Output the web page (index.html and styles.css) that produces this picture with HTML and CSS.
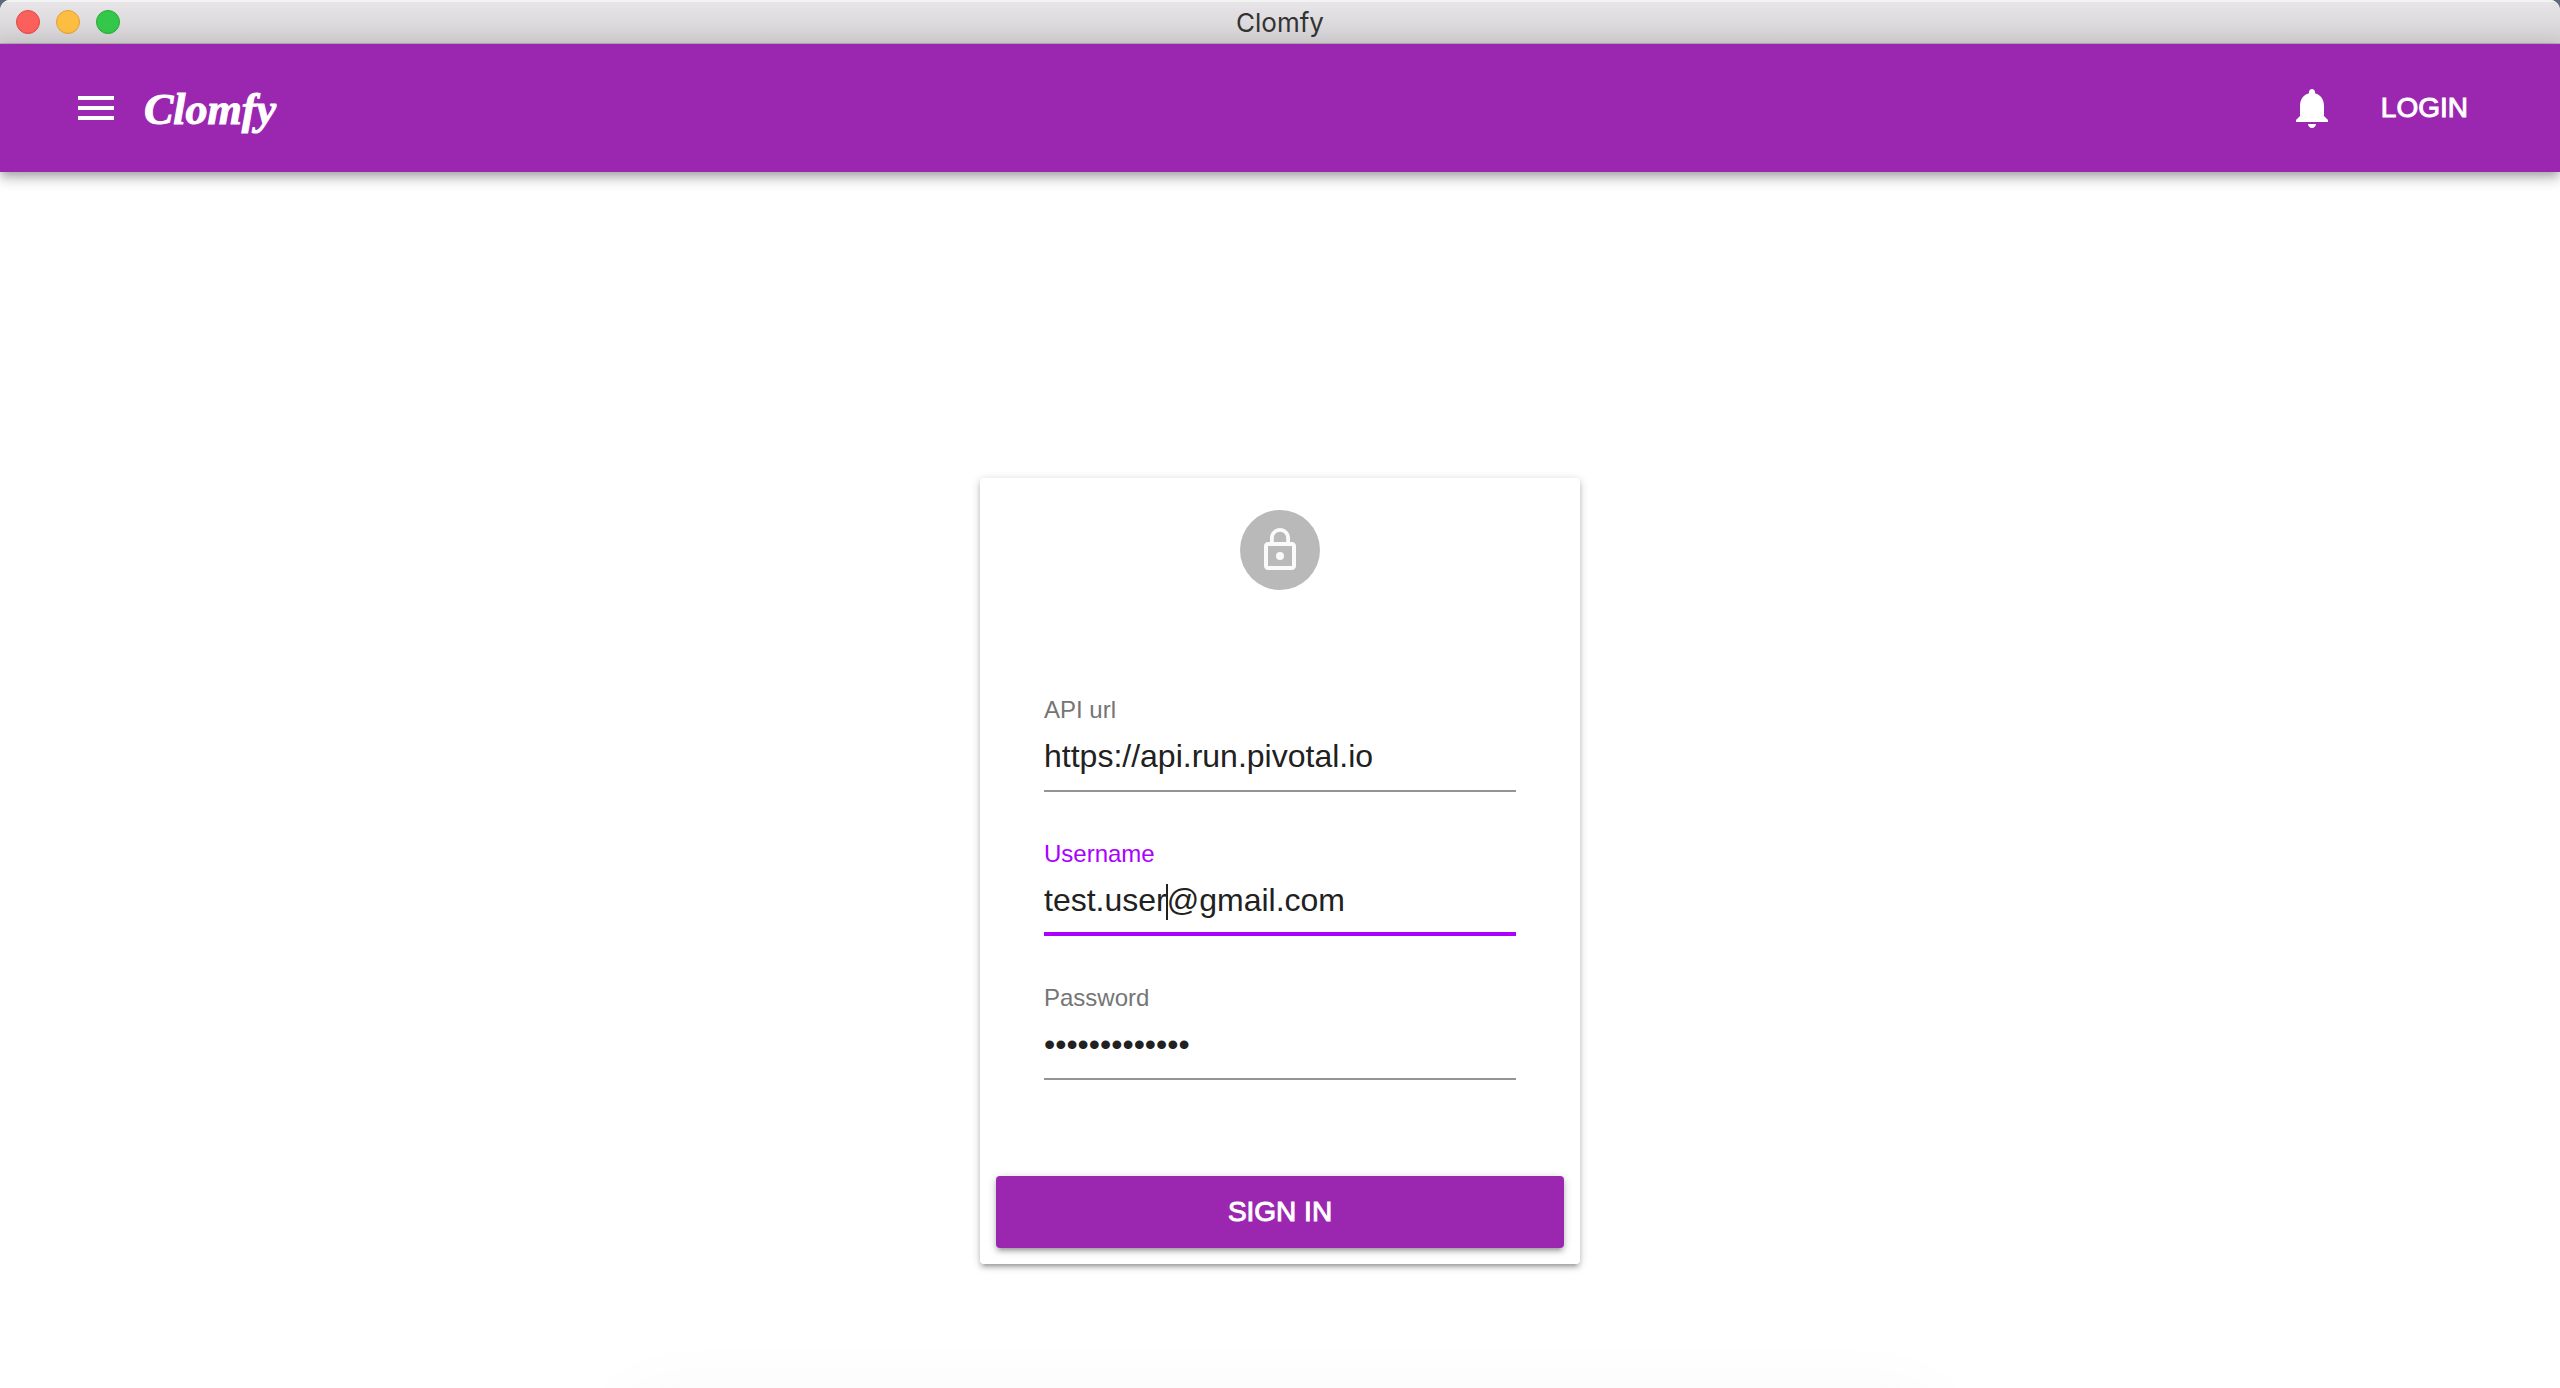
FILE: index.html
```html
<!DOCTYPE html>
<html lang="en">
<head>
  <meta charset="utf-8">
  <title>Clomfy</title>
  <link rel="stylesheet" href="styles.css">
</head>
<body>
  <div class="window">
    <div class="titlebar">
      <div class="window-controls">
        <button class="light light-close" type="button" aria-label="Close"></button>
        <button class="light light-minimize" type="button" aria-label="Minimize"></button>
        <button class="light light-zoom" type="button" aria-label="Zoom"></button>
      </div>
      <div class="window-title">Clomfy</div>
    </div>

    <header class="appbar">
      <button class="icon-button" type="button" aria-label="Menu">
        <svg class="icon" viewBox="0 0 24 24"><path d="M3 18h18v-2H3v2zm0-5h18v-2H3v2zm0-7v2h18V6H3z"/></svg>
      </button>
      <h1 class="brand">Clomfy</h1>
      <button class="icon-button" type="button" aria-label="Notifications">
        <svg class="icon" viewBox="0 0 24 24"><path d="M12 22c1.1 0 2-.9 2-2h-4c0 1.1.89 2 2 2zm6-6v-5c0-3.07-1.64-5.64-4.5-6.32V4c0-.83-.67-1.5-1.5-1.5s-1.5.67-1.5 1.5v.68C7.63 5.36 6 7.92 6 11v5l-2 2v1h16v-1l-2-2z"/></svg>
      </button>
      <button class="login" type="button">LOGIN</button>
    </header>

    <main class="main">
      <form class="card">
        <div class="avatar">
          <svg class="icon" viewBox="0 0 24 24"><path fill-rule="evenodd" d="M18 8h-1V6c0-2.76-2.24-5-5-5S7 3.24 7 6v2H6c-1.1 0-2 .9-2 2v10c0 1.1.9 2 2 2h12c1.1 0 2-.9 2-2V10c0-1.1-.9-2-2-2zM8.9 6c0-1.71 1.39-3.1 3.1-3.1s3.1 1.39 3.1 3.1v2H8.9V6zM18 20H6V10h12v10z"/><circle cx="12" cy="15" r="2"/></svg>
        </div>
        <div class="fields">
          <div class="field">
            <label class="label" for="api">API url</label>
            <div class="control"><input class="input" id="api" type="text" value="https://api.run.pivotal.io"></div>
          </div>
          <div class="field field-focused">
            <label class="label" for="username">Username</label>
            <div class="control"><input class="input" id="username" type="text" value="test.user@gmail.com"><span class="caret"></span></div>
          </div>
          <div class="field">
            <label class="label" for="password">Password</label>
            <div class="control"><input class="input" id="password" type="password" value="clomfypasswd1"></div>
          </div>
        </div>
        <button class="submit" type="button">SIGN IN</button>
      </form>
    </main>
  </div>
</body>
</html>
```
FILE: styles.css
```css
* {
  box-sizing: border-box;
}

body {
  margin: 0;
  background: #5c6a7c;
  color: #212121;
  font-family: "Liberation Sans", Arial, sans-serif;
}

button {
  border: 0;
  padding: 0;
  background: none;
  color: inherit;
  font: inherit;
}

.window {
  display: flex;
  flex-direction: column;
  min-height: 100vh;
  overflow: hidden;
  border-radius: 10px 10px 0 0;
  background: #fff;
}

.titlebar {
  display: grid;
  grid-template-columns: 1fr auto 1fr;
  align-items: center;
  height: 44px;
  padding: 0 16px;
  background: linear-gradient(#e8e6e8, #d1cfd1);
  box-shadow: inset 0 2px #f4f3f4, inset 0 -1px #b4b0b4;
}

.window-controls {
  display: flex;
  gap: 16px;
}

.light {
  width: 24px;
  height: 24px;
  border: 1px solid;
  border-radius: 50%;
}

.light-close {
  border-color: #e04845;
  background: #fc605c;
}

.light-minimize {
  border-color: #dea03a;
  background: #fdbd41;
}

.light-zoom {
  border-color: #26aa35;
  background: #34c84a;
}

.window-title {
  padding-top: 2px;
  color: #333;
  font: 26px/32px Inter, sans-serif;
}

.appbar {
  position: relative;
  z-index: 1;
  display: flex;
  align-items: center;
  height: 128px;
  padding: 0 92px 0 72px;
  background: #9b27b0;
  box-shadow: 0 4px 8px -2px rgba(0, 0, 0, .2), 0 8px 10px rgba(0, 0, 0, .14), 0 2px 20px rgba(0, 0, 0, .12);
  color: #fff;
}

.icon {
  display: block;
  width: 48px;
  height: 48px;
  fill: currentColor;
}

.brand {
  flex: 1;
  margin: 0 0 0 24px;
  padding-top: 4px;
  font: italic bold 44px/52px "Liberation Serif", serif;
  -webkit-text-stroke: 1px currentColor;
}

.login {
  margin-left: 45px;
  font-size: 28px;
  line-height: 32px;
  -webkit-text-stroke: 1px currentColor;
}

.main {
  position: relative;
  flex: 1;
  overflow: hidden;
  padding: 306px 0 100px;
}

/* Soft shadow rising from below the bottom edge */
.main::after {
  content: "";
  position: absolute;
  top: 100%;
  left: 25%;
  width: 50%;
  height: 80px;
  margin-top: 24px;
  box-shadow: 0 0 80px 12px rgba(0, 0, 0, .04);
}

.card {
  display: flex;
  flex-direction: column;
  width: 600px;
  max-width: 100%;
  margin: 0 auto;
  padding: 32px 16px 16px;
  border-radius: 4px;
  background: #fff;
  box-shadow: 0 2px 10px rgba(0, 0, 0, .2), 0 4px 4px rgba(0, 0, 0, .14), 0 6px 2px -4px rgba(0, 0, 0, .12);
}

.avatar {
  display: flex;
  align-items: center;
  justify-content: center;
  align-self: center;
  width: 80px;
  height: 80px;
  border-radius: 50%;
  background: #b9b9b9;
  color: #fafafa;
}

.fields {
  display: flex;
  flex-direction: column;
  gap: 46px;
  padding: 104px 48px 96px;
}

.label {
  display: block;
  height: 34px;
  color: #757575;
  font-size: 24px;
  line-height: 32px;
}

.control {
  position: relative;
  height: 64px;
  border-bottom: 2px solid #949494;
}

.input {
  display: block;
  width: 100%;
  height: 56px;
  border: 0;
  padding: 0;
  outline: 0;
  background: none;
  color: #212121;
  font: 32px/40px "Liberation Sans", Arial, sans-serif;
}

.field-focused .label {
  color: #aa00ff;
}

.field-focused .control {
  border-bottom: 4px solid #aa00ff;
}

.caret {
  position: absolute;
  top: 12px;
  left: 122px;
  width: 2px;
  height: 36px;
  background: #212121;
}

.submit {
  height: 72px;
  border-radius: 4px;
  background: #9b27b0;
  box-shadow: 0 2px 10px rgba(0, 0, 0, .2), 0 4px 4px rgba(0, 0, 0, .14), 0 6px 2px -4px rgba(0, 0, 0, .12);
  color: #fff;
  font-size: 28px;
  line-height: 32px;
  -webkit-text-stroke: 1px currentColor;
}
```
